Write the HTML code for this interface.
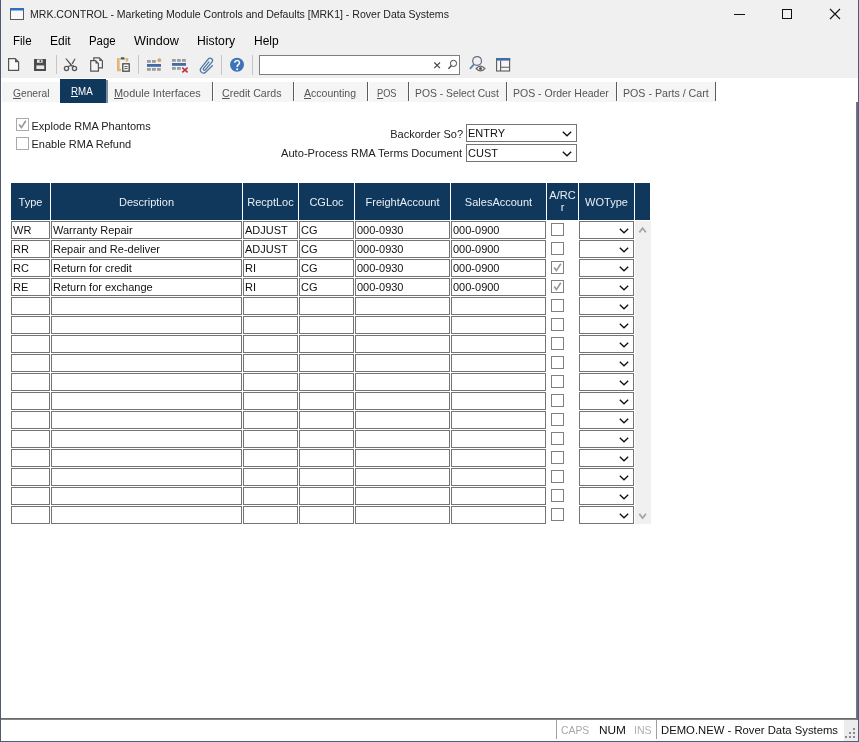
<!DOCTYPE html>
<html><head><meta charset="utf-8">
<style>
*{box-sizing:border-box;margin:0;padding:0}
html,body{width:859px;height:742px;overflow:hidden;background:#fff}
body{position:relative;font-family:"Liberation Sans",sans-serif;color:#000;will-change:transform}
.a{position:absolute;white-space:nowrap}
#chrome{position:absolute;left:0;top:0;width:859px;height:78px;background:#f0f0f0}
#tabstrip{position:absolute;left:0;top:78px;width:859px;height:25px;background:#fff}
.bl{position:absolute;left:0;top:0;width:1px;height:742px;background:#4f5b6e}
.br{position:absolute;left:858px;top:0;width:1px;height:742px;background:#4d5a82}
.menu{font-size:12px;color:#000;top:34px}
.tab{font-size:11px;color:#555;top:87px}
.tab u{text-decoration:underline;text-decoration-thickness:1px;text-underline-offset:1px}
.tsep{position:absolute;top:82px;width:1px;height:19px;background:#5c5c5c}
.sep{position:absolute;top:55px;width:1px;height:19px;background:#d8d8d8}
.lbl{font-size:11px;color:#222}
.cell{position:absolute;height:18px;border:1px solid #747474;background:#fff;font-size:11px;color:#111;padding-left:1px;line-height:16px;overflow:hidden}
.hdr{position:absolute;top:183px;height:37px;background:#0f385c;color:#e8eef5;font-size:11px;text-align:center;display:flex;align-items:center;justify-content:center;line-height:12px}
.cb{position:absolute;width:13px;height:13px;border:1px solid #808080;background:#fff}
.chev{position:absolute;width:10px;height:6px}
</style></head><body>
<div id="chrome"></div>
<div id="tabstrip"></div>

<!-- title bar -->
<svg class="a" style="left:10px;top:8px" width="15" height="13" viewBox="0 0 15 13">
<rect x="0.5" y="0.5" width="13" height="11" fill="#fafafa" stroke="#5a5a5a"/>
<rect x="0" y="0" width="14" height="2.5" fill="#2f6fc0"/>
</svg>
<div class="a" style="left:30px;top:8px;font-size:11px;color:#222;transform:scaleX(0.958);transform-origin:0 0">MRK.CONTROL - Marketing Module Controls and Defaults [MRK1] - Rover Data Systems</div>
<div class="a" style="left:734px;top:14px;width:11px;height:1px;background:#111"></div>
<div class="a" style="left:782px;top:9px;width:10px;height:10px;border:1px solid #111"></div>
<svg class="a" style="left:829px;top:8px" width="12" height="12" viewBox="0 0 12 12"><path d="M1 1L11 11M11 1L1 11" stroke="#111" stroke-width="1.1"/></svg>

<!-- menu -->
<div class="a menu" style="left:13px;transform:scaleX(0.96);transform-origin:0 0">File</div>
<div class="a menu" style="left:50px">Edit</div>
<div class="a menu" style="left:89px;transform:scaleX(0.95);transform-origin:0 0">Page</div>
<div class="a menu" style="left:134px;transform:scaleX(1.05);transform-origin:0 0">Window</div>
<div class="a menu" style="left:197px;transform:scaleX(1.02);transform-origin:0 0">History</div>
<div class="a menu" style="left:254px">Help</div>

<!-- toolbar -->
<div id="toolbar">
<svg class="a" style="left:0;top:0" width="520" height="80" viewBox="0 0 520 80">
<!-- new -->
<path d="M8.6 58.6H15.2L18.6 62V70.4H8.6Z" fill="#fafafa" stroke="#555" stroke-width="1.2"/>
<path d="M15 58.6V62.2H18.6Z" fill="#555"/>
<!-- save -->
<path d="M34 59H46V71H34Z" fill="#4b4b4b"/>
<rect x="37" y="59.6" width="5.6" height="3.2" fill="#e8e8e8"/>
<rect x="39.6" y="60.2" width="1.6" height="2" fill="#4b4b4b"/>
<rect x="36.4" y="65.4" width="7.8" height="3.6" fill="#e8e8e8"/>
<!-- sep -->
<rect x="56" y="55" width="1" height="19" fill="#c6c6c6"/>
<!-- cut -->
<path d="M65.2 58.6L66.6 58.6L73.2 66.2L71.6 66.8Z" fill="#555"/>
<path d="M75.6 58.8L74.4 58.8L71.6 63.4L72.8 64.2Z" fill="#555"/>
<g stroke="#555" stroke-width="1.3" fill="none">
<path d="M68 66.8L71 65.2M73 65.2L73.4 66.6"/>
<circle cx="66.5" cy="68.5" r="2.1"/>
<circle cx="74.5" cy="68.5" r="2.1"/>
</g>
<!-- copy -->
<g stroke="#555" stroke-width="1.2">
<path d="M93.8 57.9H99.4L102.4 60.9V67.8H93.8Z" fill="#f4f4f4"/>
<path d="M90.7 60.6H95.6L98.4 63.4V71.2H90.7Z" fill="#f4f4f4"/>
</g>
<path d="M95.5 60.6V63.6H98.4Z" fill="#555"/>
<path d="M99.3 57.9V61H102.4Z" fill="#555"/>
<!-- paste -->
<path d="M118.3 58V70H121M126.9 58V61.4" stroke="#e2b46e" stroke-width="2.6" fill="none"/>
<path d="M120.4 59.6L121 57.2H124.2L124.8 59.6Z" fill="#555"/>
<rect x="122.8" y="63.8" width="6.4" height="7.4" fill="#fafafa" stroke="#474747" stroke-width="1.3"/>
<path d="M124.4 66.6H127.6M124.4 68.6H127.6" stroke="#555" stroke-width="1"/>
<!-- sep -->
<rect x="138" y="55" width="1" height="19" fill="#c6c6c6"/>
<!-- insert row -->
<g fill="#9c9c9c">
<rect x="147" y="60" width="3.8" height="2.8"/><rect x="152" y="60" width="3.8" height="2.8"/>
<rect x="147" y="68" width="3.8" height="2.8"/><rect x="152" y="68" width="3.8" height="2.8"/><rect x="157" y="68" width="3.8" height="2.8"/>
</g>
<circle cx="159.3" cy="60.2" r="1.9" fill="#cfa666"/>
<rect x="147" y="64" width="14" height="2.8" fill="#3f6ca6"/>
<!-- delete row -->
<g fill="#9c9c9c">
<rect x="172" y="59" width="3.8" height="2.8"/><rect x="177" y="59" width="3.8" height="2.8"/><rect x="182" y="59" width="3.8" height="2.8"/>
<rect x="172" y="67" width="3.8" height="2.8"/><rect x="177" y="67" width="3.8" height="2.8"/>
</g>
<rect x="172" y="63" width="14" height="2.8" fill="#3f6ca6"/>
<path d="M182.3 67.6L187.6 72.4M187.6 67.6L182.3 72.4" stroke="#b8303e" stroke-width="1.5"/>
<!-- paperclip -->
<path d="M212.8 65.2L205.6 72.2A3.1 3.1 0 0 1 200.9 68.2L208.3 59A2.4 2.4 0 0 1 211.9 62.2L205.2 70A1.2 1.2 0 0 1 203.4 68.5L209.2 61.6" fill="#e4eef8" stroke="#55769e" stroke-width="1.2"/>
<!-- sep -->
<rect x="221" y="55" width="1" height="20" fill="#c6c6c6"/>
<!-- help -->
<circle cx="237" cy="64.8" r="7" fill="#3d74b8"/>
<path d="M234.7 62.8A2.4 2.3 0 1 1 238.7 64.5Q237.1 65.4 237.1 67" fill="none" stroke="#fff" stroke-width="1.5"/><circle cx="237.1" cy="69.3" r="1" fill="#fff"/>
<!-- sep -->
<rect x="252" y="55" width="1" height="20" fill="#c6c6c6"/>
<!-- search box -->
<rect x="259.5" y="55.5" width="200" height="19" fill="#fff" stroke="#7e7e7e" stroke-width="1"/>
<path d="M434.3 62.5L440 68.2M440 62.5L434.3 68.2" stroke="#444" stroke-width="1.1"/>
<circle cx="453.5" cy="63.4" r="3.1" fill="none" stroke="#444" stroke-width="1"/>
<path d="M451.3 65.7L448.4 68.8" stroke="#444" stroke-width="1.3"/>
<!-- search eye -->
<circle cx="477.1" cy="60.9" r="4.4" fill="none" stroke="#5f6f86" stroke-width="1.25"/>
<path d="M474 64.4L469.9 68.9" stroke="#5a82b4" stroke-width="1.8"/>
<path d="M476.2 68.5Q480.5 63.6 484.8 68.5Q480.5 73.4 476.2 68.5Z" fill="#fcfcfc" stroke="#666" stroke-width="1.25"/>
<circle cx="480.5" cy="68.5" r="1.5" fill="#555"/>
<!-- layout -->
<rect x="496.6" y="58.6" width="13" height="12.4" fill="#f6f6f6" stroke="#5a5a5a" stroke-width="1.1"/>
<rect x="496" y="58" width="14.2" height="2.6" fill="#3f6ca6"/>
<path d="M500.6 60.6V71M500.6 67.2H510" stroke="#5a5a5a" stroke-width="1.1"/>
</svg>
</div>

<!-- tabs -->
<div class="a" style="left:2px;top:82px;width:58px;height:20px;background:#f5f5f5"></div>
<div class="a" style="left:108px;top:82px;width:104px;height:20px;background:#f5f5f5"></div>
<div class="a" style="left:214px;top:82px;width:79px;height:20px;background:#f5f5f5"></div>
<div class="a" style="left:295px;top:82px;width:72px;height:20px;background:#f5f5f5"></div>
<div class="a" style="left:369px;top:82px;width:39px;height:20px;background:#f5f5f5"></div>
<div class="a" style="left:410px;top:82px;width:95.5px;height:20px;background:#f5f5f5"></div>
<div class="a" style="left:507.5px;top:82px;width:108.5px;height:20px;background:#f5f5f5"></div>
<div class="a" style="left:618px;top:82px;width:97px;height:20px;background:#f5f5f5"></div>
<div class="a" style="left:60px;top:79px;width:46px;height:24px;background:#0f385c"></div>
<div class="a tab" style="left:13.1px;transform:scaleX(0.931);transform-origin:0 0"><u>G</u>eneral</div>
<div class="a tab" style="left:71.0px;top:85px;transform:scaleX(0.886);transform-origin:0 0;color:#fff"><u>R</u>MA</div>
<div class="a tab" style="left:114.2px;transform:scaleX(0.992);transform-origin:0 0"><u>M</u>odule Interfaces</div>
<div class="a tab" style="left:222.1px;transform:scaleX(0.963);transform-origin:0 0"><u>C</u>redit Cards</div>
<div class="a tab" style="left:303.6px;transform:scaleX(0.956);transform-origin:0 0"><u>A</u>ccounting</div>
<div class="a tab" style="left:377.3px;transform:scaleX(0.84);transform-origin:0 0"><u>P</u>OS</div>
<div class="a tab" style="left:415.0px;transform:scaleX(0.94);transform-origin:0 0">POS - Select Cust</div>
<div class="a tab" style="left:512.9px;transform:scaleX(0.955);transform-origin:0 0">POS - Order Header</div>
<div class="a tab" style="left:623.2px;transform:scaleX(0.967);transform-origin:0 0">POS - Parts / Cart</div>
<div class="tsep" style="left:106px;top:80px;height:23px;width:1.5px;background:#7d8b9c"></div>
<div class="tsep" style="left:212px"></div>
<div class="tsep" style="left:293px"></div>
<div class="tsep" style="left:367px"></div>
<div class="tsep" style="left:408px"></div>
<div class="tsep" style="left:506px"></div>
<div class="tsep" style="left:616px"></div>
<div class="tsep" style="left:715px"></div>
<!-- form -->
<div id="form">
<div class="cb" style="left:16px;top:118px;border-color:#aaa"></div>
<svg class="a" style="left:17px;top:119px" width="11" height="11" viewBox="0 0 11 11"><path d="M2.2 5.6L4.4 8.6L8.8 1.8" fill="none" stroke="#999" stroke-width="1.7"/></svg>
<div class="a lbl" style="left:31.5px;top:120px">Explode RMA Phantoms</div>
<div class="cb" style="left:16px;top:137px;border-color:#aaa"></div>
<div class="a lbl" style="left:31.5px;top:138px">Enable RMA Refund</div>
<div class="a lbl" style="left:263px;width:200px;text-align:right;top:128px">Backorder So?</div>
<div class="a lbl" style="left:281px;top:147px;transform:scaleX(1.012);transform-origin:0 0">Auto-Process RMA Terms Document</div>
<div class="cell" style="left:466px;top:124px;width:111px;height:18px">ENTRY</div>
<svg class="chev" style="left:562px;top:131px" viewBox="0 0 10 6"><path d="M0.8 0.8L5 4.8L9.2 0.8" fill="none" stroke="#111" stroke-width="1.3"/></svg>
<div class="cell" style="left:466px;top:144px;width:111px;height:18px">CUST</div>
<svg class="chev" style="left:562px;top:151px" viewBox="0 0 10 6"><path d="M0.8 0.8L5 4.8L9.2 0.8" fill="none" stroke="#111" stroke-width="1.3"/></svg>
</div>

<!-- grid -->
<div id="grid">
<div class="hdr" style="left:11px;width:39px">Type</div>
<div class="hdr" style="left:51px;width:191px">Description</div>
<div class="hdr" style="left:243px;width:55px">RecptLoc</div>
<div class="hdr" style="left:299px;width:55px">CGLoc</div>
<div class="hdr" style="left:355px;width:95px">FreightAccount</div>
<div class="hdr" style="left:451px;width:95px">SalesAccount</div>
<div class="hdr" style="left:547px;width:31px;line-height:12px;padding-bottom:2px">A/RC<br>r</div>
<div class="hdr" style="left:579px;width:55px">WOType</div>
<div class="hdr" style="left:635px;width:15px"></div>
<div class="cell" style="left:11px;top:221px;width:39px">WR</div>
<div class="cell" style="left:51px;top:221px;width:191px">Warranty Repair</div>
<div class="cell" style="left:243px;top:221px;width:55px">ADJUST</div>
<div class="cell" style="left:299px;top:221px;width:55px">CG</div>
<div class="cell" style="left:355px;top:221px;width:95px">000-0930</div>
<div class="cell" style="left:451px;top:221px;width:95px">000-0900</div>
<div class="cb" style="left:551px;top:223px"></div>
<div class="cell" style="left:579px;top:221px;width:55px"></div>
<svg class="chev" style="left:619px;top:228px" viewBox="0 0 10 6"><path d="M0.8 0.8L5 4.8L9.2 0.8" fill="none" stroke="#111" stroke-width="1.3"/></svg>
<div class="cell" style="left:11px;top:240px;width:39px">RR</div>
<div class="cell" style="left:51px;top:240px;width:191px">Repair and Re-deliver</div>
<div class="cell" style="left:243px;top:240px;width:55px">ADJUST</div>
<div class="cell" style="left:299px;top:240px;width:55px">CG</div>
<div class="cell" style="left:355px;top:240px;width:95px">000-0930</div>
<div class="cell" style="left:451px;top:240px;width:95px">000-0900</div>
<div class="cb" style="left:551px;top:242px"></div>
<div class="cell" style="left:579px;top:240px;width:55px"></div>
<svg class="chev" style="left:619px;top:247px" viewBox="0 0 10 6"><path d="M0.8 0.8L5 4.8L9.2 0.8" fill="none" stroke="#111" stroke-width="1.3"/></svg>
<div class="cell" style="left:11px;top:259px;width:39px">RC</div>
<div class="cell" style="left:51px;top:259px;width:191px">Return for credit</div>
<div class="cell" style="left:243px;top:259px;width:55px">RI</div>
<div class="cell" style="left:299px;top:259px;width:55px">CG</div>
<div class="cell" style="left:355px;top:259px;width:95px">000-0930</div>
<div class="cell" style="left:451px;top:259px;width:95px">000-0900</div>
<div class="cb" style="left:551px;top:261px"></div>
<svg class="a" style="left:552px;top:262px" width="11" height="11" viewBox="0 0 11 11"><path d="M2.2 5.6L4.4 8.6L8.8 1.8" fill="none" stroke="#999" stroke-width="1.7"/></svg>
<div class="cell" style="left:579px;top:259px;width:55px"></div>
<svg class="chev" style="left:619px;top:266px" viewBox="0 0 10 6"><path d="M0.8 0.8L5 4.8L9.2 0.8" fill="none" stroke="#111" stroke-width="1.3"/></svg>
<div class="cell" style="left:11px;top:278px;width:39px">RE</div>
<div class="cell" style="left:51px;top:278px;width:191px">Return for exchange</div>
<div class="cell" style="left:243px;top:278px;width:55px">RI</div>
<div class="cell" style="left:299px;top:278px;width:55px">CG</div>
<div class="cell" style="left:355px;top:278px;width:95px">000-0930</div>
<div class="cell" style="left:451px;top:278px;width:95px">000-0900</div>
<div class="cb" style="left:551px;top:280px"></div>
<svg class="a" style="left:552px;top:281px" width="11" height="11" viewBox="0 0 11 11"><path d="M2.2 5.6L4.4 8.6L8.8 1.8" fill="none" stroke="#999" stroke-width="1.7"/></svg>
<div class="cell" style="left:579px;top:278px;width:55px"></div>
<svg class="chev" style="left:619px;top:285px" viewBox="0 0 10 6"><path d="M0.8 0.8L5 4.8L9.2 0.8" fill="none" stroke="#111" stroke-width="1.3"/></svg>
<div class="cell" style="left:11px;top:297px;width:39px"></div>
<div class="cell" style="left:51px;top:297px;width:191px"></div>
<div class="cell" style="left:243px;top:297px;width:55px"></div>
<div class="cell" style="left:299px;top:297px;width:55px"></div>
<div class="cell" style="left:355px;top:297px;width:95px"></div>
<div class="cell" style="left:451px;top:297px;width:95px"></div>
<div class="cb" style="left:551px;top:299px"></div>
<div class="cell" style="left:579px;top:297px;width:55px"></div>
<svg class="chev" style="left:619px;top:304px" viewBox="0 0 10 6"><path d="M0.8 0.8L5 4.8L9.2 0.8" fill="none" stroke="#111" stroke-width="1.3"/></svg>
<div class="cell" style="left:11px;top:316px;width:39px"></div>
<div class="cell" style="left:51px;top:316px;width:191px"></div>
<div class="cell" style="left:243px;top:316px;width:55px"></div>
<div class="cell" style="left:299px;top:316px;width:55px"></div>
<div class="cell" style="left:355px;top:316px;width:95px"></div>
<div class="cell" style="left:451px;top:316px;width:95px"></div>
<div class="cb" style="left:551px;top:318px"></div>
<div class="cell" style="left:579px;top:316px;width:55px"></div>
<svg class="chev" style="left:619px;top:323px" viewBox="0 0 10 6"><path d="M0.8 0.8L5 4.8L9.2 0.8" fill="none" stroke="#111" stroke-width="1.3"/></svg>
<div class="cell" style="left:11px;top:335px;width:39px"></div>
<div class="cell" style="left:51px;top:335px;width:191px"></div>
<div class="cell" style="left:243px;top:335px;width:55px"></div>
<div class="cell" style="left:299px;top:335px;width:55px"></div>
<div class="cell" style="left:355px;top:335px;width:95px"></div>
<div class="cell" style="left:451px;top:335px;width:95px"></div>
<div class="cb" style="left:551px;top:337px"></div>
<div class="cell" style="left:579px;top:335px;width:55px"></div>
<svg class="chev" style="left:619px;top:342px" viewBox="0 0 10 6"><path d="M0.8 0.8L5 4.8L9.2 0.8" fill="none" stroke="#111" stroke-width="1.3"/></svg>
<div class="cell" style="left:11px;top:354px;width:39px"></div>
<div class="cell" style="left:51px;top:354px;width:191px"></div>
<div class="cell" style="left:243px;top:354px;width:55px"></div>
<div class="cell" style="left:299px;top:354px;width:55px"></div>
<div class="cell" style="left:355px;top:354px;width:95px"></div>
<div class="cell" style="left:451px;top:354px;width:95px"></div>
<div class="cb" style="left:551px;top:356px"></div>
<div class="cell" style="left:579px;top:354px;width:55px"></div>
<svg class="chev" style="left:619px;top:361px" viewBox="0 0 10 6"><path d="M0.8 0.8L5 4.8L9.2 0.8" fill="none" stroke="#111" stroke-width="1.3"/></svg>
<div class="cell" style="left:11px;top:373px;width:39px"></div>
<div class="cell" style="left:51px;top:373px;width:191px"></div>
<div class="cell" style="left:243px;top:373px;width:55px"></div>
<div class="cell" style="left:299px;top:373px;width:55px"></div>
<div class="cell" style="left:355px;top:373px;width:95px"></div>
<div class="cell" style="left:451px;top:373px;width:95px"></div>
<div class="cb" style="left:551px;top:375px"></div>
<div class="cell" style="left:579px;top:373px;width:55px"></div>
<svg class="chev" style="left:619px;top:380px" viewBox="0 0 10 6"><path d="M0.8 0.8L5 4.8L9.2 0.8" fill="none" stroke="#111" stroke-width="1.3"/></svg>
<div class="cell" style="left:11px;top:392px;width:39px"></div>
<div class="cell" style="left:51px;top:392px;width:191px"></div>
<div class="cell" style="left:243px;top:392px;width:55px"></div>
<div class="cell" style="left:299px;top:392px;width:55px"></div>
<div class="cell" style="left:355px;top:392px;width:95px"></div>
<div class="cell" style="left:451px;top:392px;width:95px"></div>
<div class="cb" style="left:551px;top:394px"></div>
<div class="cell" style="left:579px;top:392px;width:55px"></div>
<svg class="chev" style="left:619px;top:399px" viewBox="0 0 10 6"><path d="M0.8 0.8L5 4.8L9.2 0.8" fill="none" stroke="#111" stroke-width="1.3"/></svg>
<div class="cell" style="left:11px;top:411px;width:39px"></div>
<div class="cell" style="left:51px;top:411px;width:191px"></div>
<div class="cell" style="left:243px;top:411px;width:55px"></div>
<div class="cell" style="left:299px;top:411px;width:55px"></div>
<div class="cell" style="left:355px;top:411px;width:95px"></div>
<div class="cell" style="left:451px;top:411px;width:95px"></div>
<div class="cb" style="left:551px;top:413px"></div>
<div class="cell" style="left:579px;top:411px;width:55px"></div>
<svg class="chev" style="left:619px;top:418px" viewBox="0 0 10 6"><path d="M0.8 0.8L5 4.8L9.2 0.8" fill="none" stroke="#111" stroke-width="1.3"/></svg>
<div class="cell" style="left:11px;top:430px;width:39px"></div>
<div class="cell" style="left:51px;top:430px;width:191px"></div>
<div class="cell" style="left:243px;top:430px;width:55px"></div>
<div class="cell" style="left:299px;top:430px;width:55px"></div>
<div class="cell" style="left:355px;top:430px;width:95px"></div>
<div class="cell" style="left:451px;top:430px;width:95px"></div>
<div class="cb" style="left:551px;top:432px"></div>
<div class="cell" style="left:579px;top:430px;width:55px"></div>
<svg class="chev" style="left:619px;top:437px" viewBox="0 0 10 6"><path d="M0.8 0.8L5 4.8L9.2 0.8" fill="none" stroke="#111" stroke-width="1.3"/></svg>
<div class="cell" style="left:11px;top:449px;width:39px"></div>
<div class="cell" style="left:51px;top:449px;width:191px"></div>
<div class="cell" style="left:243px;top:449px;width:55px"></div>
<div class="cell" style="left:299px;top:449px;width:55px"></div>
<div class="cell" style="left:355px;top:449px;width:95px"></div>
<div class="cell" style="left:451px;top:449px;width:95px"></div>
<div class="cb" style="left:551px;top:451px"></div>
<div class="cell" style="left:579px;top:449px;width:55px"></div>
<svg class="chev" style="left:619px;top:456px" viewBox="0 0 10 6"><path d="M0.8 0.8L5 4.8L9.2 0.8" fill="none" stroke="#111" stroke-width="1.3"/></svg>
<div class="cell" style="left:11px;top:468px;width:39px"></div>
<div class="cell" style="left:51px;top:468px;width:191px"></div>
<div class="cell" style="left:243px;top:468px;width:55px"></div>
<div class="cell" style="left:299px;top:468px;width:55px"></div>
<div class="cell" style="left:355px;top:468px;width:95px"></div>
<div class="cell" style="left:451px;top:468px;width:95px"></div>
<div class="cb" style="left:551px;top:470px"></div>
<div class="cell" style="left:579px;top:468px;width:55px"></div>
<svg class="chev" style="left:619px;top:475px" viewBox="0 0 10 6"><path d="M0.8 0.8L5 4.8L9.2 0.8" fill="none" stroke="#111" stroke-width="1.3"/></svg>
<div class="cell" style="left:11px;top:487px;width:39px"></div>
<div class="cell" style="left:51px;top:487px;width:191px"></div>
<div class="cell" style="left:243px;top:487px;width:55px"></div>
<div class="cell" style="left:299px;top:487px;width:55px"></div>
<div class="cell" style="left:355px;top:487px;width:95px"></div>
<div class="cell" style="left:451px;top:487px;width:95px"></div>
<div class="cb" style="left:551px;top:489px"></div>
<div class="cell" style="left:579px;top:487px;width:55px"></div>
<svg class="chev" style="left:619px;top:494px" viewBox="0 0 10 6"><path d="M0.8 0.8L5 4.8L9.2 0.8" fill="none" stroke="#111" stroke-width="1.3"/></svg>
<div class="cell" style="left:11px;top:506px;width:39px"></div>
<div class="cell" style="left:51px;top:506px;width:191px"></div>
<div class="cell" style="left:243px;top:506px;width:55px"></div>
<div class="cell" style="left:299px;top:506px;width:55px"></div>
<div class="cell" style="left:355px;top:506px;width:95px"></div>
<div class="cell" style="left:451px;top:506px;width:95px"></div>
<div class="cb" style="left:551px;top:508px"></div>
<div class="cell" style="left:579px;top:506px;width:55px"></div>
<svg class="chev" style="left:619px;top:513px" viewBox="0 0 10 6"><path d="M0.8 0.8L5 4.8L9.2 0.8" fill="none" stroke="#111" stroke-width="1.3"/></svg>
<div class="a" style="left:635px;top:221px;width:16px;height:303px;background:#f0f0f0"></div>
<svg class="a" style="left:638px;top:226px" width="10" height="8" viewBox="0 0 10 8"><path d="M1.3 6.4L4.6 2.2L7.9 6.4" fill="none" stroke="#a6a6a6" stroke-width="1.7"/></svg>
<svg class="a" style="left:638px;top:512px" width="10" height="8" viewBox="0 0 10 8"><path d="M1.3 1.9L4.6 6.1L7.9 1.9" fill="none" stroke="#a6a6a6" stroke-width="1.7"/></svg>
</div><!--/grid-->

<!-- status bar -->
<div class="a" style="left:0;top:718px;width:857px;height:1px;background:#6a6a6a"></div>
<div class="a" style="left:0;top:719px;width:857px;height:1px;background:#858585"></div>
<div class="a" style="left:856px;top:102px;width:1px;height:618px;background:#7a7a7a"></div>
<div class="a" style="left:857px;top:102px;width:2px;height:618px;background:#5b6a92"></div>
<div class="a" style="left:0;top:720px;width:858px;height:21px;background:#fff"></div>
<div class="a" style="left:556px;top:720px;width:1px;height:19px;background:#a0a0a0"></div>
<div class="a" style="left:656px;top:720px;width:1px;height:19px;background:#a0a0a0"></div>
<div class="a" style="left:561px;top:724px;font-size:11.5px;color:#a8a8a8;transform:scaleX(0.9);transform-origin:0 0">CAPS</div>
<div class="a" style="left:599px;top:724px;font-size:11.5px;color:#111;transform:scaleX(1.03);transform-origin:0 0">NUM</div>
<div class="a" style="left:634px;top:724px;font-size:11.5px;color:#b0b0b0;transform:scaleX(0.92);transform-origin:0 0">INS</div>
<div class="a" style="left:661px;top:724px;font-size:11.3px;color:#111">DEMO.NEW - Rover Data Systems</div>
<div class="a" style="left:844px;top:720px;width:14px;height:21px;background:#ececec"></div>
<svg class="a" style="left:844px;top:720px" width="14" height="21" viewBox="0 0 14 21" fill="#8a8a8a">
<rect x="9" y="8" width="2" height="2"/><rect x="5" y="12" width="2" height="2"/><rect x="9" y="12" width="2" height="2"/>
<rect x="1" y="16" width="2" height="2"/><rect x="5" y="16" width="2" height="2"/><rect x="9" y="16" width="2" height="2"/>
</svg>
<div class="a" style="left:0;top:741px;width:859px;height:1px;background:#4d5e78"></div>
<div class="bl"></div><div class="br"></div>
</body></html>
